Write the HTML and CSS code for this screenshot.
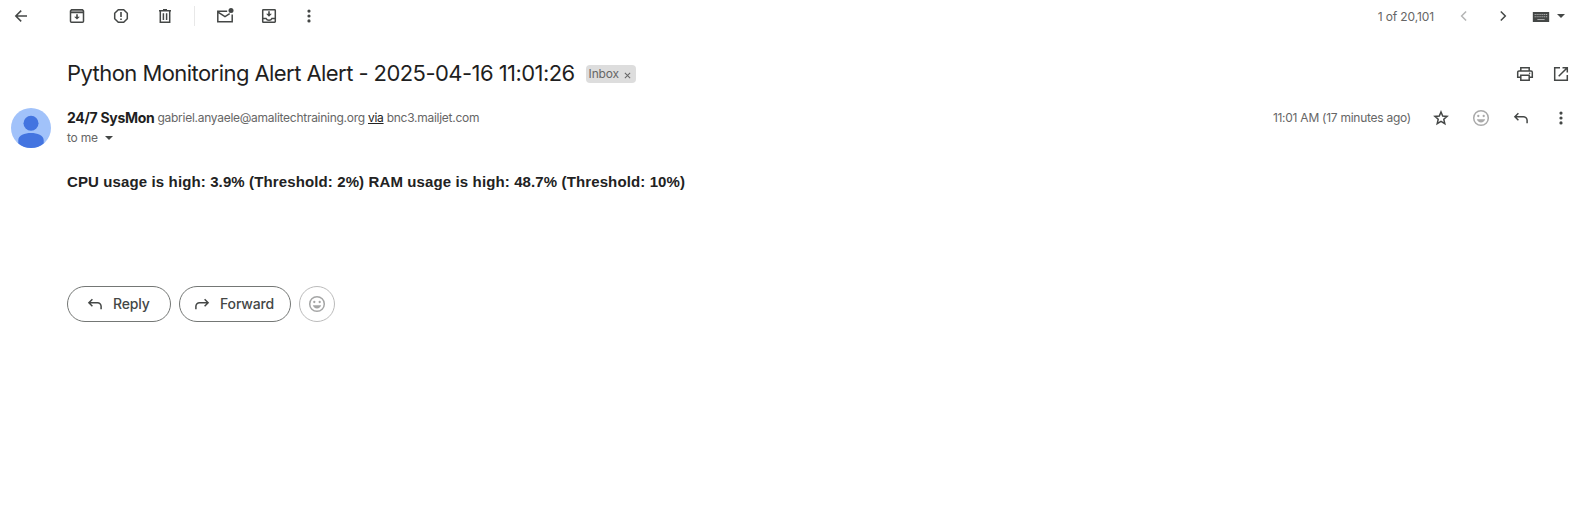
FILE: index.html
```html
<!DOCTYPE html>
<html lang="en">
<head>
<meta charset="utf-8">
<title>Python Monitoring Alert</title>
<link rel="stylesheet" href="styles.css">
</head>
<body>
<svg class="defs" aria-hidden="true">
  <symbol id="smile" viewBox="0 0 20 20"><circle cx="10" cy="10" r="7.3" fill="none" stroke="currentColor" stroke-width="1.5"/><circle cx="7.3" cy="8" r="1.15"/><circle cx="12.7" cy="8" r="1.15"/><path d="M5.8 11.3h8.4a4.4 4.4 0 0 1-8.4 0z"/></symbol>
  <symbol id="dots" viewBox="0 0 20 20"><circle cx="10" cy="5.1" r="1.6"/><circle cx="10" cy="10" r="1.6"/><circle cx="10" cy="14.9" r="1.6"/></symbol>
  <symbol id="reply" viewBox="0 0 20 20"><path class="line" d="M7.4 5.2 3.9 8.7l3.5 3.5M4 8.7h8.5a3.6 3.6 0 0 1 3.6 3.6v3"/></symbol>
</svg>
<header class="toolbar">
  <svg class="icon back" viewBox="0 0 20 20"><path class="line" d="M16 10H5M10.2 4.6 4.8 10l5.4 5.4"/></svg>
  <svg class="icon archive" viewBox="0 0 20 20"><rect x="3.5" y="3.7" width="13" height="3" fill="#aaa"/><path class="line" d="M4.6 3.7h10.8l1.1 1.4v10.2a1 1 0 0 1-1 1h-11a1 1 0 0 1-1-1V5.1zM3.7 6.4h12.6"/><path d="M9.2 8.2h1.6v2.5h2.1L10 13.6l-2.9-2.9h2.1z"/></svg>
  <svg class="icon report" viewBox="0 0 20 20"><path class="line" d="M7.3 3.7h5.4l3.6 3.6v5.4l-3.6 3.6H7.3l-3.6-3.6V7.3z"/><path d="M9.2 6h1.6v5H9.2zM9.2 12.4h1.6V14H9.2z"/></svg>
  <svg class="icon trash" viewBox="0 0 20 20"><path class="line" d="M4 4.7h12M8 3.8h4M5.3 5v11.3h9.4V5M8.4 7.3v6.6M11.6 7.3v6.6"/></svg>
  <span class="divider"></span>
  <svg class="icon unread" viewBox="0 0 20 20"><path class="line" d="M12.2 5.2H2.8v10.5h14.4V8.4M3 6.2l7 4.4 4.7-2.9"/><circle cx="16" cy="4.6" r="2.5"/></svg>
  <svg class="icon move" viewBox="0 0 20 20"><rect class="line" x="3.7" y="3.7" width="12.6" height="12.6" rx=".7"/><path class="line" d="M3.7 12.5h3.4c1 2.3 4.8 2.3 5.8 0h3.4"/><path d="M9.2 5.3h1.6v2.5h2.1L10 10.7 7.1 7.8h2.1z"/></svg>
  <svg class="icon more"><use href="#dots"/></svg>
  <span class="count">1 of 20,101</span>
  <svg class="icon newer" viewBox="0 0 20 20"><path class="line" d="m12.1 5.5-4.5 4.5 4.5 4.5"/></svg>
  <svg class="icon older" viewBox="0 0 20 20"><path class="line" d="m7.8 5.5 4.5 4.5-4.5 4.5"/></svg>
  <svg class="keyboard" viewBox="0 0 18 11"><path d="M0 0h18v11H0z"/><path d="M2 2.8h14M2 5.3h14" stroke="#bbb" stroke-width="1.2" stroke-dasharray="1.2 .9"/><path d="M5 8.3h8" stroke="#bbb" stroke-width="1"/></svg>
  <svg class="caret" viewBox="0 0 8 4"><path d="M0 0h8L4 4z"/></svg>
</header>
<main class="mail">
  <div class="subject">
    <h1>Python Monitoring Alert Alert - 2025-04-16 11:01:26</h1>
    <span class="label"><span class="label-name">Inbox</span><svg viewBox="0 0 8 8"><path d="m1 1 6 6M7 1 1 7"/></svg></span>
    <svg class="icon print" viewBox="0 0 20 20"><path class="line" d="M5.8 6.6V3.8h8.4v2.8M5.7 13.3h-3V8.2a1.3 1.3 0 0 1 1.3-1.3h12a1.3 1.3 0 0 1 1.3 1.3v5.1h-3M5.8 11.2h8.4v5.1H5.8z"/><circle cx="14.6" cy="9.2" r=".8"/></svg>
    <svg class="icon popout" viewBox="0 0 20 20"><path class="line" d="M9 3.7H3.7v12.6h12.6V11M11.5 3.7h4.8v4.8M16 4l-8.3 8.3"/></svg>
  </div>
  <section class="message">
    <svg class="avatar" viewBox="0 0 40 40"><circle cx="20" cy="20" r="20" fill="#a1c2fa"/><circle cx="20" cy="15.3" r="7.5" fill="#4374e0"/><path d="M7.3 35.4v-3.2c0-9.6 25.4-9.6 25.4 0v3.2a20 20 0 0 1-25.4 0z" fill="#4374e0"/></svg>
    <div class="content">
      <div class="sender-row">
        <span class="name">24/7 SysMon</span>
        <span class="address">gabriel.anyaele@amalitechtraining.org <a>via</a> bnc3.mailjet.com</span>
        <span class="time">11:01 AM (17 minutes ago)</span>
        <svg class="icon star" viewBox="0 0 20 20"><path class="line" d="m10 4 1.7 4 4.4.4-3.3 2.9 1 4.3-3.8-2.3-3.8 2.3 1-4.3-3.3-2.9 4.4-.4z"/></svg>
        <svg class="icon react"><use href="#smile"/></svg>
        <svg class="icon"><use href="#reply"/></svg>
        <svg class="icon"><use href="#dots"/></svg>
      </div>
      <div class="recipient"><span>to me</span><svg class="caret" viewBox="0 0 8 4"><path d="M0 0h8L4 4z"/></svg></div>
      <p class="body-text">CPU usage is high: 3.9% (Threshold: 2%) RAM usage is high: 48.7% (Threshold: 10%)</p>
      <div class="actions">
        <button class="reply"><svg class="icon"><use href="#reply"/></svg><span>Reply</span></button>
        <button class="forward"><svg class="icon flip"><use href="#reply"/></svg><span>Forward</span></button>
        <button class="emoji"><svg class="icon"><use href="#smile"/></svg></button>
      </div>
    </div>
  </section>
</main>
</body>
</html>
```
FILE: styles.css
```css
* { box-sizing: border-box; }
body { margin: 0; background: #fff; color: #1f1f1f; font-family: Inter, "Open Sans", sans-serif; }
svg { display: block; flex: none; fill: currentColor; }
.defs { position: absolute; width: 0; height: 0; }
.icon { width: 20px; height: 20px; color: #444746; }
.line { fill: none; stroke: currentColor; stroke-width: 1.5; }
span, h1 { white-space: nowrap; }

.toolbar { display: flex; align-items: center; height: 32px; padding: 0 20px 0 11px; }
.archive { margin-left: 36px; }
.report, .trash, .move { margin-left: 24px; }
.divider { width: 1px; height: 20px; margin: 0 20px 0 19px; background: #e8e8e8; }
.more { margin-left: 20px; }
.count { margin-left: auto; margin-right: 20px; font-size: 12px; letter-spacing: -.12px; color: #666; }
.newer { color: #b4b5b5; margin-right: 19px; }
.older { stroke-width: 2; }
.keyboard { width: 18px; height: 10px; margin: 2px 7px 0 19px; color: #444746; }
.caret { width: 8px; height: 4px; color: #444746; }

.subject { display: flex; align-items: center; height: 36px; margin-top: 24px; padding: 0 14px 0 67px; }
h1 { margin: 0; padding-bottom: 1px; font-size: 22px; font-weight: 400; line-height: 27px; letter-spacing: -.56px; }
.label { display: flex; align-items: center; gap: 5px; height: 18px; margin-left: 11px; padding: 0 5px 0 3px; border-radius: 4px; background: #ddd; color: #666; font-size: 12px; line-height: 18px; }
.label-name { letter-spacing: -.2px; }
.label svg { width: 7px; height: 7px; stroke: #666; stroke-width: 1.2; margin-top: 2px; }
.print { margin-left: auto; margin-right: 16px; }

.message { display: flex; padding: 16px 14px 0 11px; }
.avatar { width: 40px; height: 40px; }
.content { flex: 1; min-width: 0; margin-left: 16px; }
.sender-row { display: flex; align-items: center; height: 20px; font-size: 12px; color: #666; }
.name { margin-right: 3px; padding-bottom: 1px; color: #1f1f1f; font-size: 14px; font-weight: 700; letter-spacing: -.3px; }
.address { padding-bottom: 2px; letter-spacing: -.27px; }
.address a { color: #222; text-decoration: underline; }
.time { margin-left: auto; padding-bottom: 2px; letter-spacing: -.26px; }
.sender-row .icon { margin-left: 20px; }
.sender-row .react { color: #aaa; }
.recipient { display: flex; align-items: center; gap: 7px; height: 20px; color: #666; font-size: 12px; letter-spacing: -.25px; }
.recipient span { padding-bottom: 2px; }
.body-text { margin: 24px 0 0; font: bold 15px/20px "Liberation Sans", Arial, sans-serif; letter-spacing: .12px; color: #222; }
.actions { display: flex; gap: 8px; margin-top: 94px; }
button { display: flex; align-items: center; height: 36px; padding: 0; border: 1px solid #747775; border-radius: 18px; background: #fff; color: #444746; font: 500 14px/20px Inter, sans-serif; letter-spacing: -.15px; }
button .icon { margin-right: 8px; }
.reply { width: 104px; padding-left: 17px; }
.forward { width: 112px; padding-left: 12px; }
.flip { transform: scaleX(-1); }
.emoji { width: 36px; justify-content: center; border-color: #bbb; }
.emoji .icon { margin: 0; color: #a5a6a6; }
```
